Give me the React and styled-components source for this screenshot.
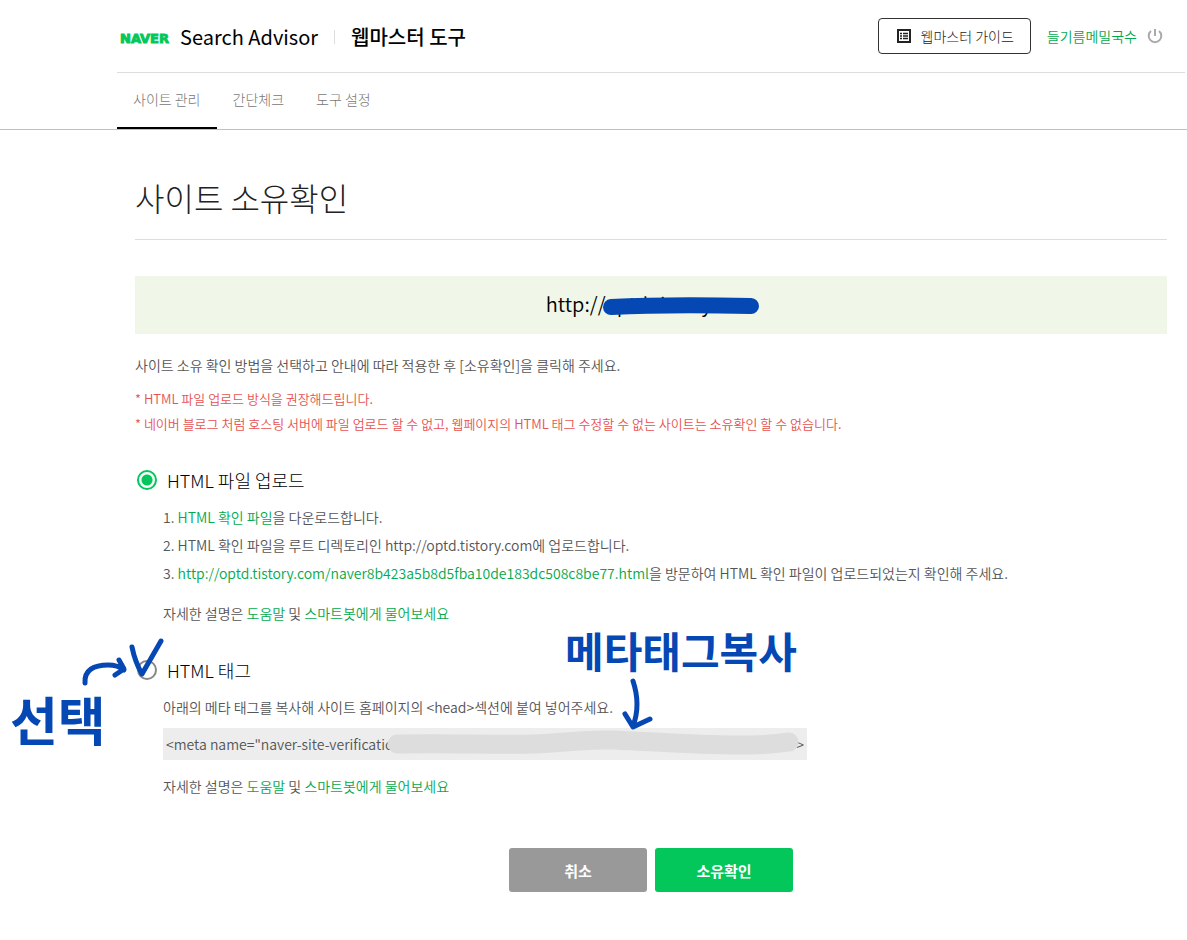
import React, { useState } from "react";
import styled, { createGlobalStyle } from "styled-components";

const INK = "#0547b3";

function App() {
  const [method, setMethod] = useState("file");

  return (
    <>
      <GlobalStyle />
      <Header>
        <HeaderTop>
          <Brand>
            <NaverLogo href="#naver">NAVER</NaverLogo>
            <BrandLink href="#search-advisor">Search Advisor</BrandLink>
            <Divider />
            <BrandLink href="#webmaster" $strong>
              웹마스터 도구
            </BrandLink>
          </Brand>
          <HeaderRight>
            <GuideButton type="button">
              <GuideIcon />
              웹마스터 가이드
            </GuideButton>
            <Account>
              <a href="#account">들기름메밀국수</a>
              <PowerButton type="button" aria-label="로그아웃">
                <PowerIcon />
              </PowerButton>
            </Account>
          </HeaderRight>
        </HeaderTop>
        <Nav>
          <NavLink href="#sites" $active>
            사이트 관리
          </NavLink>
          <NavLink href="#check">간단체크</NavLink>
          <NavLink href="#settings">도구 설정</NavLink>
        </Nav>
      </Header>

      <Main>
        <Title>사이트 소유확인</Title>
        <SiteBox>
          <SiteUrl>
            http://optd.tistory.com
            <UrlMarker viewBox="0 0 158 20" aria-hidden="true">
              <path d="M9 11C50 9 100 9 149 10" />
            </UrlMarker>
          </SiteUrl>
        </SiteBox>

        <Intro>사이트 소유 확인 방법을 선택하고 안내에 따라 적용한 후 [소유확인]을 클릭해 주세요.</Intro>
        <Notices>
          <li>* HTML 파일 업로드 방식을 권장해드립니다.</li>
          <li>
            * 네이버 블로그 처럼 호스팅 서버에 파일 업로드 할 수 없고, 웹페이지의 HTML 태그 수정할 수 없는
            사이트는 소유확인 할 수 없습니다.
          </li>
        </Notices>

        <Option>
          <OptionLabel>
            <Radio
              type="radio"
              name="method"
              checked={method === "file"}
              onChange={() => setMethod("file")}
            />
            HTML 파일 업로드
          </OptionLabel>
          <OptionBody>
            <Steps>
              <li>
                1. <a href="#download">HTML 확인 파일</a>을 다운로드합니다.
              </li>
              <li>2. HTML 확인 파일을 루트 디렉토리인 http://optd.tistory.com에 업로드합니다.</li>
              <li>
                3. <a href="#visit">http://optd.tistory.com/naver8b423a5b8d5fba10de183dc508c8be77.html</a>을
                방문하여 HTML 확인 파일이 업로드되었는지 확인해 주세요.
              </li>
            </Steps>
            <HelpText />
          </OptionBody>
        </Option>

        <Option>
          <OptionLabel>
            <Radio
              type="radio"
              name="method"
              checked={method === "tag"}
              onChange={() => setMethod("tag")}
            />
            HTML 태그
          </OptionLabel>
          <SelectNote>
            <svg width="156" height="56" viewBox="0 0 156 56" aria-hidden="true">
              <path d="M75 46C74 33 84 28 98 28Q108 28 114 33M109 23L114 32L105 38" />
              <path d="M122 10Q125 25 132 37L151 4" />
            </svg>
            <NoteText $size={52}>선택</NoteText>
          </SelectNote>
          <OptionBody>
            <BodyText>아래의 메타 태그를 복사해 사이트 홈페이지의 &lt;head&gt;섹션에 붙여 넣어주세요.</BodyText>
            <MetaField>
              <MetaInput
                aria-label="메타 태그"
                readOnly
                value={'<meta name="naver-site-verification" content="'}
              />
              <span>&gt;</span>
              <MetaMarker viewBox="0 0 412 26" aria-hidden="true">
                <path d="M10 14C60 13 110 15 145 14S195 9 225 10S310 15 350 15S390 13 402 12" />
              </MetaMarker>
              <CopyNote>
                <NoteText $size={42}>메타태그복사</NoteText>
                <svg width="34" height="56" viewBox="0 0 34 56" aria-hidden="true">
                  <path d="M12 5Q20 29 12 50M4 38L12 51L29 43" />
                </svg>
              </CopyNote>
            </MetaField>
            <HelpText />
          </OptionBody>
        </Option>

        <Actions>
          <ActionButton type="button">취소</ActionButton>
          <ActionButton type="button" $primary>
            소유확인
          </ActionButton>
        </Actions>
      </Main>
    </>
  );
}

function HelpText() {
  return (
    <Help>
      자세한 설명은 <a href="#help">도움말</a> 및 <a href="#smartbot">스마트봇에게 물어보세요</a>
    </Help>
  );
}

function GuideIcon() {
  return (
    <svg width="14" height="14" viewBox="0 0 14 14" fill="none" stroke="currentColor" aria-hidden="true">
      <rect x="1" y="1" width="12" height="12" strokeWidth="2" />
      <path d="M3 4.5h2M3 7h2M3 9.5h2M6 4.5h5M6 7h5M6 9.5h5" strokeWidth="1.4" />
    </svg>
  );
}

function PowerIcon() {
  return (
    <svg width="16" height="16" viewBox="0 0 16 16" fill="none" stroke="currentColor" aria-hidden="true">
      <path d="M4 3A6.3 6.3 0 1 0 12 3M8 1v7" strokeWidth="2" />
    </svg>
  );
}

export default App;

const GlobalStyle = createGlobalStyle`
  * {
    box-sizing: border-box;
  }

  body {
    margin: 0;
    background: #fff;
    color: #555;
    font-family: "Noto Sans CJK KR", sans-serif;
    font-size: 14px;
    font-weight: 350;
  }

  button, input {
    font: inherit;
  }

  a {
    color: #03a94d;
    text-decoration: none;
  }

  ul, ol {
    margin: 0;
    padding: 0;
    list-style: none;
  }
`;

const Header = styled.header`
  padding: 0 2px 0 117px;
  border-bottom: 1px solid #c0c0c0;
`;

const HeaderTop = styled.div`
  display: flex;
  align-items: center;
  justify-content: space-between;
  height: 73px;
  padding: 0 22px 0 3px;
  border-bottom: 1px solid #ddd;
`;

const Brand = styled.div`
  display: flex;
  align-items: center;
  padding-top: 2px;
`;

const NaverLogo = styled.a`
  margin-right: 11px;
  padding-top: 2px;
  color: #03c75a;
  font-family: "DejaVu Sans", sans-serif;
  font-size: 13px;
  font-weight: 700;
  -webkit-text-stroke: 1px #03c75a;
`;

const BrandLink = styled.a`
  color: #000;
  font-size: 20px;
  font-weight: ${(props) => (props.$strong ? 500 : 400)};
  line-height: 28px;
`;

const Divider = styled.span`
  width: 1px;
  height: 14px;
  margin: 0 16px;
  background: #ddd;
`;

const HeaderRight = styled.div`
  display: flex;
  align-items: center;
  gap: 16px;
`;

const GuideButton = styled.button`
  display: flex;
  align-items: center;
  gap: 10px;
  height: 36px;
  padding: 0 16px 0 18px;
  border: 1px solid #333;
  border-radius: 4px;
  background: #fff;
  color: #222;
  font-weight: 300;
`;

const Account = styled.div`
  display: flex;
  align-items: center;
  gap: 10px;
`;

const PowerButton = styled.button`
  display: flex;
  padding: 0;
  border: 0;
  background: none;
  color: #aaa;
`;

const Nav = styled.nav`
  display: flex;
`;

const NavLink = styled.a`
  height: 56px;
  padding: 0 16px;
  border-bottom: 2px solid ${(props) => (props.$active ? "#000" : "transparent")};
  color: #777;
  font-weight: 300;
  line-height: 52px;
`;

const Main = styled.main`
  padding: 42px 20px 48px 135px;
`;

const Title = styled.h1`
  margin: 0 0 36px;
  padding-bottom: 17px;
  border-bottom: 1px solid #ddd;
  color: #222;
  font-size: 32px;
  font-weight: 300;
  line-height: 50px;
`;

const SiteBox = styled.div`
  padding: 13px 14px 15px;
  background: #f0f7e9;
  color: #000;
  font-size: 20px;
  line-height: 30px;
  text-align: center;
`;

const SiteUrl = styled.span`
  position: relative;
  display: inline-block;
`;

const UrlMarker = styled.svg`
  position: absolute;
  top: 7px;
  right: -4px;
  width: 158px;
  height: 20px;
  fill: none;
  stroke: ${INK};
  stroke-width: 16px;
  stroke-linecap: round;
`;

const Intro = styled.p`
  margin: 20px 0 10px;
  line-height: 22px;
`;

const Notices = styled.ul`
  margin-bottom: 30px;
  color: #e65252;
  font-size: 13px;
  line-height: 25px;
`;

const Option = styled.section`
  position: relative;
  margin-bottom: 29px;
`;

const OptionLabel = styled.label`
  display: flex;
  align-items: center;
  gap: 10px;
  padding-left: 2px;
  color: #000;
  font-size: 18px;
  font-weight: 300;
  line-height: 28px;
`;

const Radio = styled.input`
  appearance: none;
  width: 20px;
  height: 20px;
  margin: 0;
  border: 2px solid #888;
  border-radius: 50%;
  background: #fff;

  &:checked {
    border-color: #03c75a;
    background: radial-gradient(#03c75a 5px, #fff 6px);
  }
`;

const OptionBody = styled.div`
  padding: 9px 0 0 28px;
`;

const Steps = styled.ol`
  line-height: 28px;
`;

const BodyText = styled.p`
  margin: 0 0 7px;
  line-height: 28px;
`;

const Help = styled.p`
  margin: 12px 0 0;
  line-height: 28px;
`;

const MetaField = styled.div`
  position: relative;
  display: flex;
  align-items: center;
  max-width: 644px;
  height: 32px;
  padding: 0 3px;
  background: #ededed;
`;

const MetaInput = styled.input`
  flex: 1;
  min-width: 0;
  padding: 0;
  border: 0;
  outline: 0;
  background: transparent;
  color: #555;
`;

const MetaMarker = styled.svg`
  position: absolute;
  top: 2px;
  left: 224px;
  width: 412px;
  height: 26px;
  fill: none;
  stroke: #ddd;
  stroke-width: 19px;
  stroke-linecap: round;
`;

/* Pen notes laid over the form */
const Note = styled.div`
  position: absolute;
  pointer-events: none;

  svg {
    display: block;
    overflow: visible;
    fill: none;
    stroke: ${INK};
    stroke-width: 5px;
    stroke-linecap: round;
    stroke-linejoin: round;
  }
`;

const SelectNote = styled(Note)`
  top: -19px;
  left: -125px;
`;

const CopyNote = styled(Note)`
  bottom: 28px;
  left: 402px;

  svg {
    margin-left: 56px;
  }
`;

const NoteText = styled.span`
  display: block;
  color: ${INK};
  font-size: ${(props) => props.$size}px;
  font-weight: 700;
  line-height: 52px;
  white-space: nowrap;
`;

const Actions = styled.div`
  display: flex;
  justify-content: center;
  gap: 8px;
  margin-top: 48px;
`;

const ActionButton = styled.button`
  width: 138px;
  height: 44px;
  border: 0;
  border-radius: 3px;
  background: ${(props) => (props.$primary ? "#03c75a" : "#999")};
  color: #fff;
  font-size: 15px;
  font-weight: 700;
`;
